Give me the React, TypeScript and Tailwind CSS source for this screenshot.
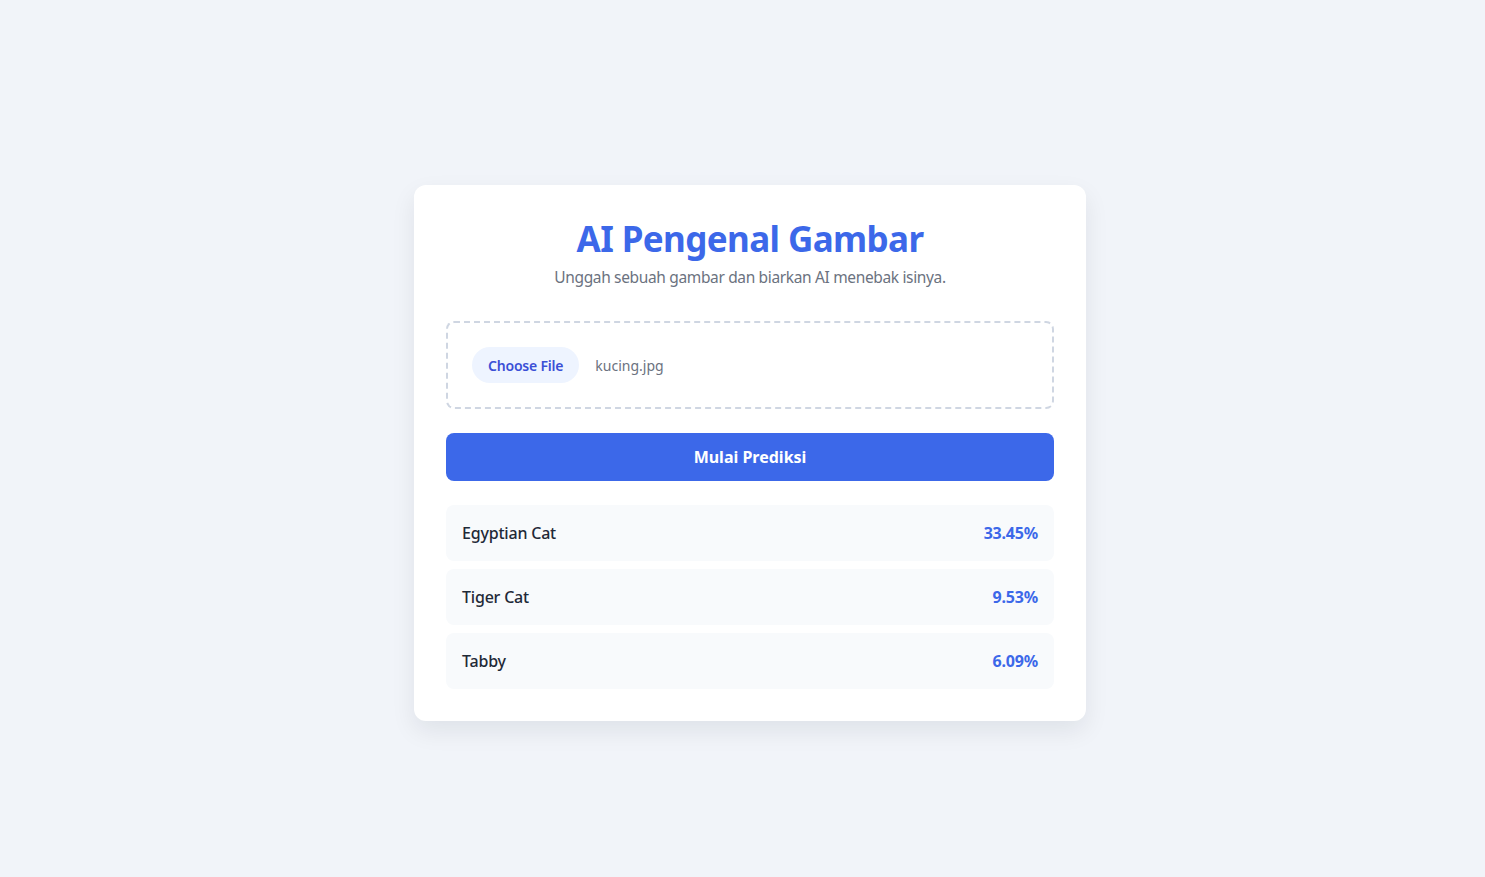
const results = [
  { label: 'Egyptian Cat', pct: '33.45%' },
  { label: 'Tiger Cat', pct: '9.53%' },
  { label: 'Tabby', pct: '6.09%' },
];

export default function App() {
  return (
    <div
      className="min-h-screen bg-[#f1f4f9] flex justify-center items-start pt-[185px] pl-[15px]"
      style={{ fontFamily: '"Noto Sans", "Open Sans", sans-serif' }}
    >
      <div className="w-[672px] bg-white rounded-xl p-8 shadow-[0_10px_25px_rgba(15,23,42,0.08)]">
        <h1 className="text-center text-[35px] leading-[44px] tracking-[-0.6px] font-bold text-[#3c68e9]">
          AI Pengenal Gambar
        </h1>
        <p className="text-center text-[15.5px] leading-6 tracking-[-0.35px] text-[#6b7280] mt-[4px]">
          Unggah sebuah gambar dan biarkan AI menebak isinya.
        </p>

        <div className="mt-[32px] border-2 border-dashed border-[#cfd6e2] rounded-lg p-6 flex items-center gap-4">
          <button className="h-9 px-4 rounded-full bg-[#eef4ff] text-[#3a4fd6] text-[14px] font-semibold tracking-[-0.2px]">
            Choose File
          </button>
          <span className="text-[14px] text-[#6b7280]">kucing.jpg</span>
        </div>

        <button className="mt-6 w-full h-12 rounded-lg bg-[#3c68e9] text-white text-[16px] font-bold">
          Mulai Prediksi
        </button>

        <div className="mt-6 flex flex-col gap-2">
          {results.map((r) => (
            <div key={r.label} className="h-14 px-4 rounded-lg bg-[#f8fafc] flex items-center justify-between">
              <span className="text-[16px] font-medium text-[#1f2937] tracking-[-0.2px]">{r.label}</span>
              <span className="text-[16px] font-bold text-[#3c68e9] tracking-[-0.2px]">{r.pct}</span>
            </div>
          ))}
        </div>
      </div>
    </div>
  );
}
